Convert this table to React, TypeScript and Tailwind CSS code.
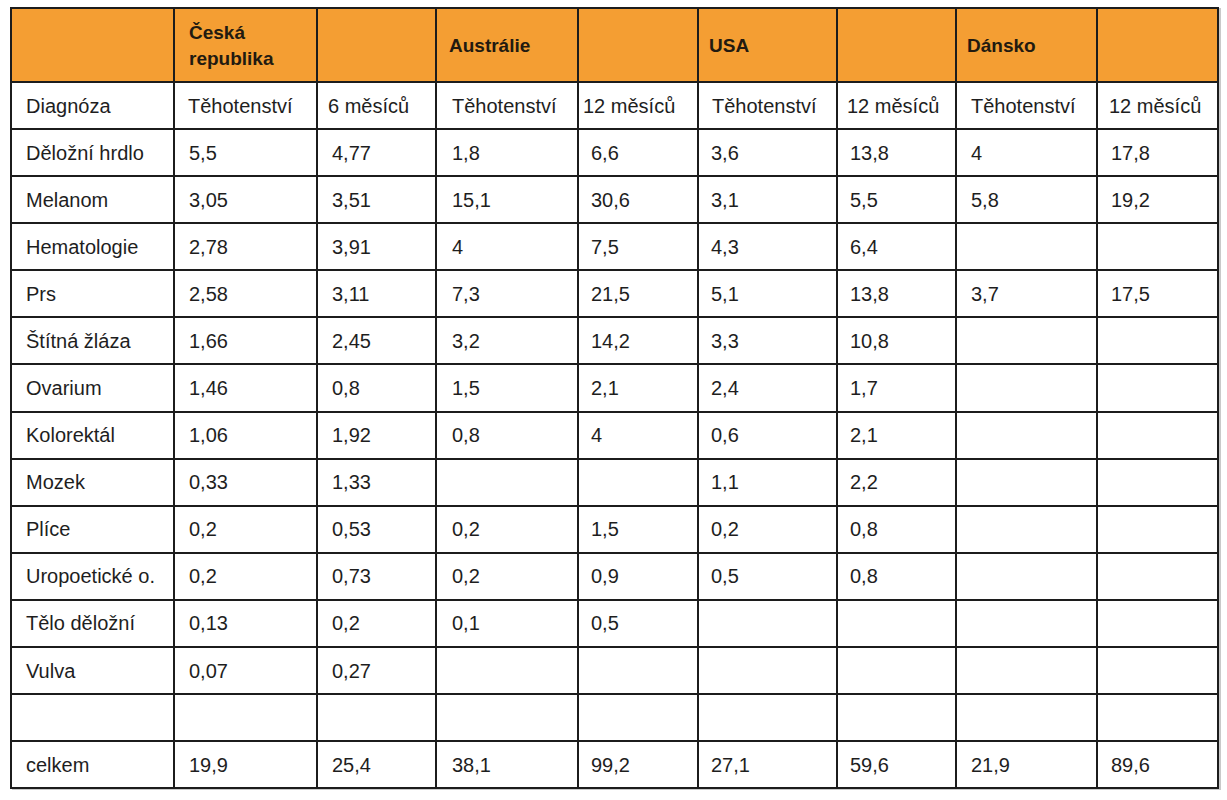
import React from "react";

const colW = ["w-[163px]", "w-[143px]", "w-[119px]", "w-[142px]", "w-[120px]", "w-[139px]", "w-[119px]", "w-[141px]", "w-[121px]"];

const header = ["", "Česká republika", "", "Austrálie", "", "USA", "", "Dánsko", ""];
const headerPad = ["pl-[13px]", "pl-[14px]", "pl-[13px]", "pl-[12px]", "pl-[13px]", "pl-[10px]", "pl-[13px]", "pl-[10px]", "pl-[13px]"];

const sub = ["Diagnóza", "Těhotenství", "6 měsíců", "Těhotenství", "12 měsíců", "Těhotenství", "12 měsíců", "Těhotenství", "12 měsíců"];
const subPad = ["pl-[14px]", "pl-[13px]", "pl-[10px]", "pl-[15px]", "pl-[4px]", "pl-[13px]", "pl-[9px]", "pl-[14px]", "pl-[11px]"];

const rows: string[][] = [
  ["Děložní hrdlo", "5,5", "4,77", "1,8", "6,6", "3,6", "13,8", "4", "17,8"],
  ["Melanom", "3,05", "3,51", "15,1", "30,6", "3,1", "5,5", "5,8", "19,2"],
  ["Hematologie", "2,78", "3,91", "4", "7,5", "4,3", "6,4", "", ""],
  ["Prs", "2,58", "3,11", "7,3", "21,5", "5,1", "13,8", "3,7", "17,5"],
  ["Štítná žláza", "1,66", "2,45", "3,2", "14,2", "3,3", "10,8", "", ""],
  ["Ovarium", "1,46", "0,8", "1,5", "2,1", "2,4", "1,7", "", ""],
  ["Kolorektál", "1,06", "1,92", "0,8", "4", "0,6", "2,1", "", ""],
  ["Mozek", "0,33", "1,33", "", "", "1,1", "2,2", "", ""],
  ["Plíce", "0,2", "0,53", "0,2", "1,5", "0,2", "0,8", "", ""],
  ["Uropoetické o.", "0,2", "0,73", "0,2", "0,9", "0,5", "0,8", "", ""],
  ["Tělo děložní", "0,13", "0,2", "0,1", "0,5", "", "", "", ""],
  ["Vulva", "0,07", "0,27", "", "", "", "", "", ""],
  ["", "", "", "", "", "", "", "", ""],
  ["celkem", "19,9", "25,4", "38,1", "99,2", "27,1", "59,6", "21,9", "89,6"],
];
const bodyPad = ["pl-[14px]", "pl-[14px]", "pl-[14px]", "pl-[15px]", "pl-[12px]", "pl-[12px]", "pl-[12px]", "pl-[14px]", "pl-[13px]"];

const cell = "border-r-2 border-b-2 border-[#1c1c1c] align-middle whitespace-nowrap p-0";

export default function App() {
  return (
    <div className="w-[1227px] h-[800px] bg-white pt-[7px] pl-[10px] font-['Liberation_Sans',Arial,sans-serif]">
      <table className="table-fixed border-separate border-spacing-0 border-l-2 border-t-2 border-[#1c1c1c] text-[20px] text-[#1e1e1e] shadow-[2px_1px_0_#c9c9c9]">
        <colgroup>
          {colW.map((w, i) => (
            <col key={i} className={w} />
          ))}
        </colgroup>
        <thead>
          <tr className="h-[74px] bg-[#f49e33]">
            {header.map((h, i) => (
              <th
                key={i}
                className={`${cell} ${headerPad[i]} pr-1 pt-[2px] text-left font-bold text-[19px] leading-[26px] text-[#221a10]`}
              >
                {h === "Česká republika" ? (
                  <span>
                    Česká
                    <br />
                    republika
                  </span>
                ) : (
                  h
                )}
              </th>
            ))}
          </tr>
        </thead>
        <tbody>
          <tr className="h-[47px]">
            {sub.map((s, i) => (
              <td key={i} className={`${cell} ${subPad[i]}`}>
                {s}
              </td>
            ))}
          </tr>
          {rows.map((r, ri) => (
            <tr key={ri} className="h-[47.1px]">
              {r.map((c, i) => (
                <td key={i} className={`${cell} ${bodyPad[i]}`}>
                  {c}
                </td>
              ))}
            </tr>
          ))}
        </tbody>
      </table>
    </div>
  );
}
